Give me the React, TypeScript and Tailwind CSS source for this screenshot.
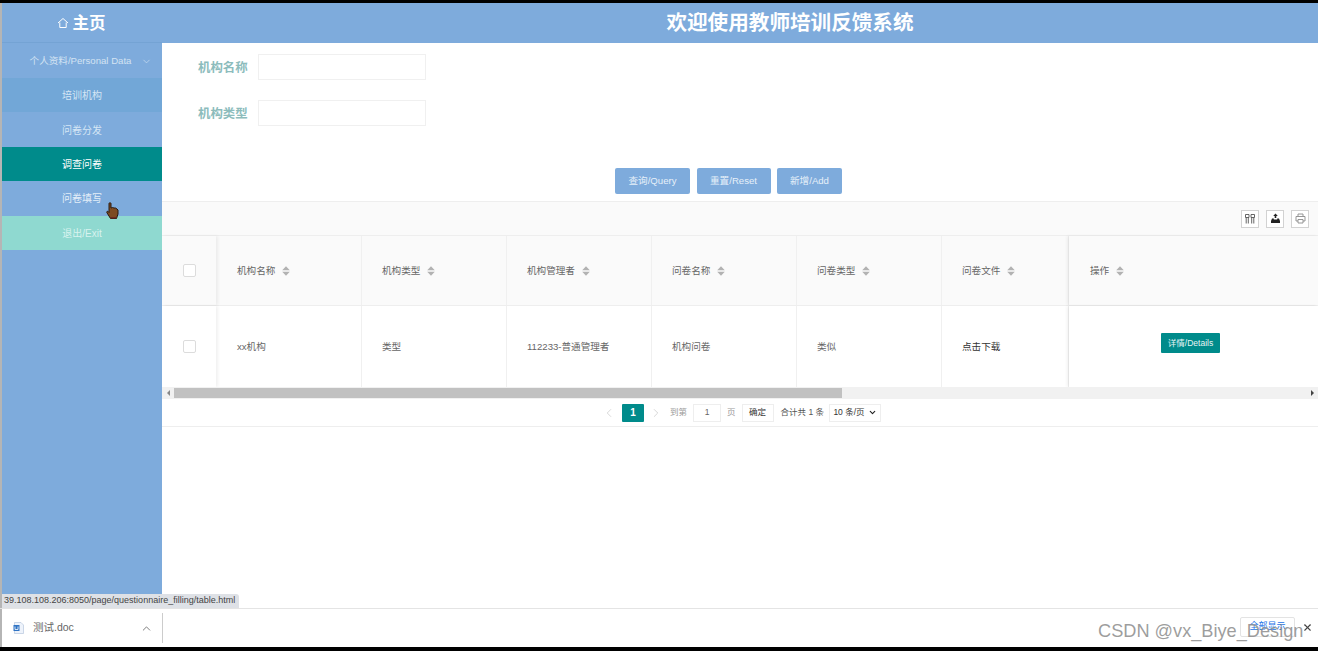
import { ChevronDown, ChevronLeft, ChevronRight, ChevronUp, X } from "lucide-react";

const font = "font-['Liberation_Sans','Noto_Sans_CJK_SC',sans-serif]";

const columns = [
  { title: "机构名称", value: "xx机构", width: "w-[146px]", dark: false },
  { title: "机构类型", value: "类型", width: "w-[145px]", dark: false },
  { title: "机构管理者", value: "112233-普通管理者", width: "w-[145px]", dark: false },
  { title: "问卷名称", value: "机构问卷", width: "w-[145px]", dark: false },
  { title: "问卷类型", value: "类似", width: "w-[145px]", dark: false },
  { title: "问卷文件", value: "点击下载", width: "w-[127px]", dark: true },
];

const menu = [
  { label: "培训机构", cls: "bg-[#72a7d7] text-[#d5e6f5]" },
  { label: "问卷分发", cls: "bg-[#7eabdc] text-[#d5e6f5]" },
  { label: "调查问卷", cls: "bg-[#008b8b] text-white" },
  { label: "问卷填写", cls: "bg-[#7eabdc] text-[#e3eef8]" },
  { label: "退出/Exit", cls: "bg-[#8fd9d0] text-[#d8f3ef]" },
];

function SortIcon() {
  return (
    <svg width="8" height="10" viewBox="0 0 8 10" className="shrink-0">
      <path d="M4 0.3 L7.8 4.3 H0.2 Z M0.2 5.7 H7.8 L4 9.7 Z" fill="#b2b2b2" />
    </svg>
  );
}

function Checkbox() {
  return <div className="h-[13px] w-[13px] rounded-[2px] border border-[#dcdcdc] bg-white" />;
}

function ToolButton({ children }: { children: React.ReactNode }) {
  return (
    <div className="flex h-[18px] w-[18px] items-center justify-center border border-[#d2d2d2] bg-white">
      {children}
    </div>
  );
}

function HandCursor() {
  return (
    <svg width="13" height="18" viewBox="0 0 13 18" className="absolute left-[106px] top-[202px]">
      <path
        d="M3 1.5 C3 0.5 5 0.5 5 1.5 V6 L6.5 5.5 L8 6 L9.5 6 L11 7 L12 8 V12 L10.5 16.5 H4.5 L0.8 10.5 C0.5 9.5 1.5 9 2.2 9.5 L3 10.5 Z"
        fill="#7d4a22"
        stroke="#2a1a10"
        strokeWidth="1"
      />
      <path d="M4.6 15 H10.6 L10.4 16.6 H4.6 Z" fill="#6d2a22" />
    </svg>
  );
}

export default function App() {
  return (
    <div className={`relative flex h-[651px] w-[1318px] flex-col overflow-hidden bg-black ${font}`}>
      <div className="h-[3px] shrink-0 bg-black" />

      <div className="flex h-[605px] shrink-0 bg-white">
        <div className="w-[2px] shrink-0 bg-[#b5b5b5]" />
        <aside className="flex w-[160px] shrink-0 flex-col bg-[#7eabdc]">
          <div className="flex h-10 items-center justify-center gap-[4px] border-b border-[#74a3d4] pr-[2px] pt-px text-white">
            <svg width="12" height="12" viewBox="0 0 12 12" fill="none" stroke="#fff" strokeWidth="1">
              <path d="M1 6 L6 1.5 L11 6 M2.8 5.5 V10.5 H9.2 V5.5" />
            </svg>
            <span className="text-[16.5px] font-bold">主页</span>
          </div>
          <div className="flex h-[35px] items-center justify-center gap-[10px] pl-[18px] pt-px text-[9.6px] text-[#d3e3f3]">
            <span>个人资料/Personal Data</span>
            <ChevronDown size={11} strokeWidth={1.4} />
          </div>
          {menu.map((item) => (
            <div key={item.label} className={`flex h-[34.4px] items-center justify-center pt-px text-[10px] ${item.cls}`}>
              {item.label}
            </div>
          ))}
        </aside>

        <main className="flex min-w-0 flex-1 flex-col">
          <div className="flex h-10 shrink-0 items-center justify-center bg-[#7eabdc] pl-[100px] pt-px text-[20.6px] font-bold text-white">
            欢迎使用教师培训反馈系统
          </div>

          <div className="flex flex-col gap-[19px] pt-[10px]">
            {["机构名称", "机构类型"].map((label) => (
              <div key={label} className="flex h-[27px] items-center">
                <span className="w-[96px] pl-[36px] pt-[4px] text-[12.4px] font-bold text-[#8cbcbc]">{label}</span>
                <div className="h-[26px] w-[168px] border border-[#f0f0f0] bg-white" />
              </div>
            ))}
          </div>

          <div className="mt-[42px] flex justify-center gap-[6.5px] pr-[23px]">
            {[
              ["查询/Query", "w-[75px]"],
              ["重置/Reset", "w-[74px]"],
              ["新增/Add", "w-[65px]"],
            ].map(([label, width]) => (
              <div
                key={label}
                className={`flex h-[26px] items-center justify-center rounded-[2px] bg-[#7eabdc] text-[9.6px] text-[#e6f0f9] ${width}`}
              >
                {label}
              </div>
            ))}
          </div>

          <div className="mt-[7px] flex h-[35px] shrink-0 items-center justify-end gap-[7px] border-y border-[#eeeeee] bg-[#fafafa] pr-[9px]">
            <ToolButton>
              <svg width="10" height="10" viewBox="0 0 10 10" fill="none" stroke="#555" strokeWidth="0.9">
                <path d="M0.5 0.5 H4 V3.5 H0.5 Z M6 0.5 H9.5 V3.5 H6 Z M1.2 3.5 V9.5 M3.3 3.5 V9.5 M6.7 3.5 V9.5 M8.8 3.5 V9.5" />
              </svg>
            </ToolButton>
            <ToolButton>
              <svg width="11" height="11" viewBox="0 0 11 11">
                <path d="M5.5 0.5 L7.8 3 H6.3 V5 H4.7 V3 H3.2 Z" fill="#222" />
                <path d="M2 5.5 H3.8 V6.4 H7.2 V5.5 H9 L10 8 V10 H1 V8 Z" fill="#222" />
              </svg>
            </ToolButton>
            <ToolButton>
              <svg width="11" height="11" viewBox="0 0 11 11" fill="none" stroke="#8a8a8a" strokeWidth="0.9">
                <path d="M3 3.5 V1 H8 V3.5 M3 8 H1 V3.5 H10 V8 H8 M3 6.5 H8 V10 H3 Z" />
              </svg>
            </ToolButton>
          </div>

          <div className="flex h-[70px] shrink-0 border-b border-[#eeeeee] bg-[#fafafa] text-[9.6px] text-[#666666]">
            <div className="flex w-[54px] shrink-0 items-center justify-center shadow-[2px_0_3px_rgba(0,0,0,0.06)]">
              <Checkbox />
            </div>
            {columns.map((c, i) => (
              <div
                key={c.title}
                className={`flex shrink-0 items-center gap-[7px] border-r border-[#f0f0f0] ${i === 0 ? "pl-[21px]" : "pl-[20px]"} ${c.width}`}
              >
                <span className="pt-px">{c.title}</span>
                <SortIcon />
              </div>
            ))}
            <div className="flex flex-1 items-center gap-[7px] pl-[21px] shadow-[-2px_0_3px_rgba(0,0,0,0.06)]">
              <span className="pt-px">操作</span>
              <SortIcon />
            </div>
          </div>

          <div className="flex h-[81px] shrink-0 bg-white text-[9.6px] text-[#666666]">
            <div className="flex w-[54px] shrink-0 items-center justify-center shadow-[2px_0_3px_rgba(0,0,0,0.06)]">
              <Checkbox />
            </div>
            {columns.map((c, i) => (
              <div
                key={c.title}
                className={`flex shrink-0 items-center border-r border-[#f0f0f0] pt-px ${i === 0 ? "pl-[21px]" : "pl-[20px]"} ${c.width} ${c.dark ? "text-[#333333]" : ""}`}
              >
                {c.value}
              </div>
            ))}
            <div className="flex flex-1 justify-center pr-[6px] pt-[27px] shadow-[-2px_0_3px_rgba(0,0,0,0.06)]">
              <div className="flex h-[20px] w-[59px] items-center justify-center rounded-[1px] bg-[#008b8b] text-[8.5px] text-[#e6f5f5]">
                详情/Details
              </div>
            </div>
          </div>

          <div className="flex h-[12px] shrink-0 items-center bg-[#f1f1f1]">
            <div className="flex w-[12px] shrink-0 justify-center">
              <div className="h-0 w-0 border-y-[3px] border-r-[3px] border-y-transparent border-r-[#888888]" />
            </div>
            <div className="h-[10px] w-[668px] bg-[#c1c1c1]" />
            <div className="flex-1" />
            <div className="flex w-[12px] shrink-0 justify-center">
              <div className="h-0 w-0 border-y-[3px] border-l-[3px] border-y-transparent border-l-[#444444]" />
            </div>
          </div>

          <div className="flex h-[28px] shrink-0 items-center border-b border-[#eeeeee] pl-[440px] text-[8.5px] text-[#666666]">
            <ChevronLeft size={14} strokeWidth={1} className="text-[#bbbbbb]" />
            <div className="ml-[6px] flex h-[18px] w-[22px] items-center justify-center rounded-[1px] bg-[#008b8b] text-[10px] font-bold text-white">
              1
            </div>
            <ChevronRight size={14} strokeWidth={1} className="ml-[5px] text-[#bbbbbb]" />
            <span className="ml-[7px] text-[#999999]">到第</span>
            <div className="ml-[6px] flex h-[18px] w-[28px] items-center justify-center border border-[#eeeeee] text-[#666666]">
              1
            </div>
            <span className="ml-[6px] text-[#999999]">页</span>
            <div className="ml-[6px] flex h-[18px] w-[32px] items-center justify-center border border-[#eeeeee] text-[#333333]">
              确定
            </div>
            <span className="ml-[7px] text-[#555555]">合计共 1 条</span>
            <div className="ml-[5px] flex h-[18px] w-[52px] items-center justify-center gap-[3px] border border-[#eeeeee] text-[#333333]">
              <span>10 条/页</span>
              <ChevronDown size={9} strokeWidth={3} className="text-[#222222]" />
            </div>
          </div>

          <div className="flex-1 bg-white" />
        </main>
      </div>

      <div className="flex h-[39px] shrink-0 items-center border-t border-[#e4e4e4] bg-white">
        <div className="w-[2px] self-stretch bg-[#b5b5b5]" />
        <div className="flex h-[30px] w-[161px] items-center border-r border-[#cccccc] pl-[11px] pr-[9px] text-[10.5px] text-[#666666]">
          <svg width="11" height="12" viewBox="0 0 11 12" className="shrink-0">
            <path d="M1.5 0.5 H8 L10.5 3 V11.5 H1.5 Z" fill="#eef3fb" stroke="#b8c7dc" strokeWidth="0.7" />
            <path d="M0.5 3 H6.5 V9 H0.5 Z" fill="#2f73c4" />
            <path d="M2 4.5 V7.5 H5 V4.5" fill="none" stroke="#fff" strokeWidth="0.8" />
          </svg>
          <span className="ml-[9px] flex-1">测试.doc</span>
          <ChevronUp size={13} strokeWidth={1.4} className="text-[#555555]" />
        </div>
      </div>

      <div className="h-[4px] shrink-0 bg-black" />

      <div className="absolute left-[2px] top-[594px] flex h-[14px] w-[237px] items-center rounded-tr-[3px] bg-[#dee1e6] pl-[2px] text-[9px] text-[#444444]">
        39.108.108.206:8050/page/questionnaire_filling/table.html
      </div>

      <HandCursor />

      <div className="absolute left-[1240px] top-[617px] flex h-[20px] w-[55px] items-center justify-center rounded-[2px] border border-[#e3e3e3] text-[9px] text-[#1a73e8]">
        全部显示
      </div>
      <X size={11} strokeWidth={2.4} className="absolute left-[1302px] top-[622px] text-[#444444]" />
      <div className="absolute left-[1098px] top-[619px] text-[18.2px] leading-[24px] text-[#8c8c8c]/85">
        CSDN @vx_Biye_Design
      </div>
    </div>
  );
}
